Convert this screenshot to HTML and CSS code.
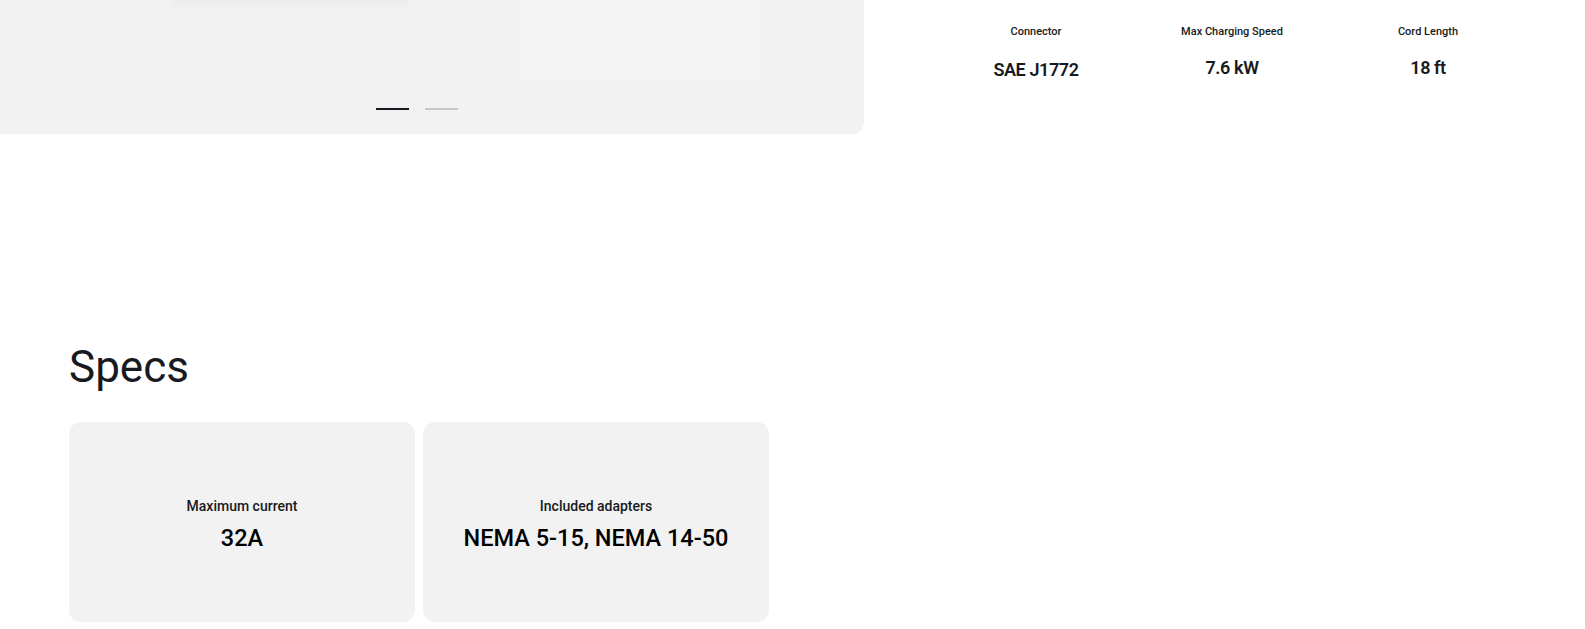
FILE: index.html
```html
<!DOCTYPE html>
<html lang="en">
<head>
<meta charset="utf-8">
<title>Wall Connector Specs</title>
<link rel="stylesheet" href="styles.css">
</head>
<body>
<div class="hero">
  <div class="gallery">
    <div class="shape shape-a"></div>
    <div class="shape shape-b"></div>
    <div class="shape shape-c"></div>
    <div class="dots">
      <span class="dot active"></span>
      <span class="dot"></span>
    </div>
  </div>
  <div class="quick">
    <div class="quick-item">
      <div class="quick-label">Connector</div>
      <div class="quick-value low">SAE J1772</div>
    </div>
    <div class="quick-item">
      <div class="quick-label">Max Charging Speed</div>
      <div class="quick-value">7.6 kW</div>
    </div>
    <div class="quick-item">
      <div class="quick-label">Cord Length</div>
      <div class="quick-value">18 ft</div>
    </div>
  </div>
</div>

<section class="specs">
  <h2 class="specs-title">Specs</h2>
  <div class="cards">
    <div class="card">
      <div class="card-label">Maximum current</div>
      <div class="card-value">32A</div>
    </div>
    <div class="card">
      <div class="card-label">Included adapters</div>
      <div class="card-value">NEMA 5-15, NEMA 14-50</div>
    </div>
  </div>
</section>
</body>
</html>
```

FILE: styles.css
```css
html, body {
  margin: 0;
  padding: 0;
  background: #ffffff;
  color: #171a20;
  font-family: Roboto, "Liberation Sans", Arial, sans-serif;
}

.hero {
  display: flex;
  align-items: flex-start;
}

.gallery {
  position: relative;
  width: 864px;
  height: 134px;
  flex: 0 0 864px;
  background: #f2f2f2;
  border-bottom-right-radius: 12px;
  display: flex;
  align-items: flex-end;
  justify-content: center;
  padding: 0 30px 24px 0;
  box-sizing: border-box;
  overflow: hidden;
}

.shape {
  position: absolute;
  filter: blur(3px);
}
.shape-a { left: 170px; top: -4px; width: 240px; height: 10px; background: #ededed; }
.shape-b { left: 520px; top: 0; width: 240px; height: 80px; background: #f3f3f3; }
.shape-c { left: 10px; top: 66px; width: 140px; height: 14px; background: #f1f1f1; }

.dots {
  position: relative;
  display: flex;
  gap: 16px;
}

.dot {
  display: block;
  width: 33px;
  height: 2px;
  background: #c6c6c6;
}

.dot.active {
  background: #171a20;
}

.quick {
  display: grid;
  grid-template-columns: repeat(3, 196px);
  padding-left: 74px;
}

.quick-item {
  display: flex;
  flex-direction: column;
  align-items: center;
  text-align: center;
}

.quick-label {
  margin-top: 24px;
  font-size: 11px;
  line-height: 15px;
  font-weight: 500;
  color: #171a20;
}

.quick-value {
  margin-top: 18px;
  font-size: 18px;
  line-height: 22px;
  font-weight: 600;
  color: #171a20;
  letter-spacing: -0.4px;
}

.quick-value.low {
  margin-top: 20px;
}

.specs {
  padding: 207px 0 0 69px;
}

.specs-title {
  margin: 0 0 29px 0;
  font-size: 44px;
  line-height: 52px;
  font-weight: 400;
  color: #171a20;
}

.cards {
  display: grid;
  grid-template-columns: 346px 346px;
  gap: 8px;
}

.card {
  height: 200px;
  background: #f2f2f2;
  border-radius: 12px;
  display: flex;
  flex-direction: column;
  align-items: center;
  justify-content: center;
  padding-top: 5px;
  box-sizing: border-box;
}

.card-label {
  font-size: 14px;
  line-height: 18px;
  font-weight: 500;
  color: #171a20;
}

.card-value {
  margin-top: 8px;
  font-size: 23.5px;
  line-height: 30px;
  font-weight: 500;
  color: #000000;
}
```
